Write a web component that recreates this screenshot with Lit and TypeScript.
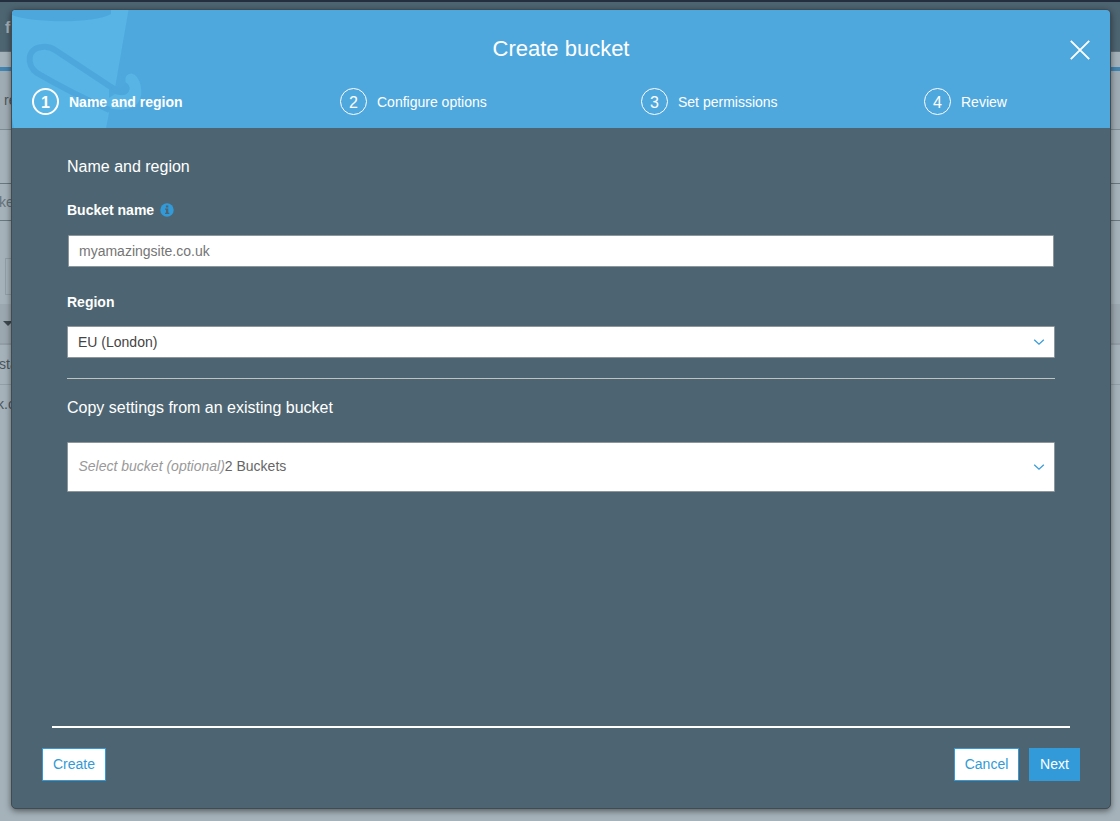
import { LitElement, html, css, svg } from "lit";
import { customElement } from "lit/decorators.js";

const chevron = svg`<svg class="chevron" width="12" height="8" viewBox="0 0 12 8"><path d="M1.200 1.700L6 6.200L10.800 1.700" fill="none" stroke="#3a9bdc" stroke-width="1.300"/></svg>`;

@customElement("page-backdrop")
class PageBackdrop extends LitElement {
  static styles = css`
    :host {
      display: flex;
      flex-direction: column;
      height: 821px;
      overflow: hidden;
      background: #a5b2ba;
      color: #4b565e;
      font: 14px/20px "Liberation Sans", Arial, sans-serif;
      white-space: nowrap;
    }
    div { box-sizing: border-box; flex: none; }
    .top { height: 2px; background: #232f3e; }
    .nav { height: 50px; background: #4d6471; border-bottom: 1px solid #62727c; padding: 16px 0 0 5px; font-weight: bold; font-size: 16px; color: #a5b0b6; }
    .gap { height: 15px; }
    .accent { height: 4px; background: #4185b0; }
    .banner { height: 59px; background: #a0acb4; border-bottom: 1px solid #7f8b93; padding: 19px 0 0 4px; }
    .space { height: 53px; }
    .search { height: 38px; border-top: 1px solid #69777f; border-bottom: 1px solid #69777f; padding-top: 8px; color: #66727a; text-indent: -1px; }
    .tools { height: 83px; padding: 37px 0 0 5px; }
    .box { width: 60px; height: 37px; border: 1px solid #929ea6; }
    .head { height: 41px; background: #9ca8b0; border-bottom: 2px solid #929da5; padding: 17px 0 0 3px; }
    .caret { width: 0; border: 5px solid transparent; border-top-color: #3c474f; border-bottom: 0; }
    .row { height: 40px; border-bottom: 1px solid #939fa7; padding-top: 9px; text-indent: -1px; }
    .last { border: 0; text-indent: -3px; }
  `;
  render() {
    return html`
      <div class="top"></div>
      <div class="nav">f</div>
      <div class="gap"></div>
      <div class="accent"></div>
      <div class="banner">re</div>
      <div class="space"></div>
      <div class="search">ke</div>
      <div class="tools"><div class="box"></div></div>
      <div class="head"><div class="caret"></div></div>
      <div class="row">sta</div>
      <div class="row last">k.c</div>
    `;
  }
}

@customElement("bucket-dialog")
class BucketDialog extends LitElement {
  static styles = css`
    :host {
      display: flex;
      flex-direction: column;
      box-sizing: border-box;
      width: 1100px;
      height: 800px;
      border: 1px solid #414b52;
      border-radius: 5px;
      overflow: hidden;
      background: #4d6572;
      color: #fff;
      box-shadow: 0 2px 6px rgba(0, 0, 0, 0.5);
      font: 14px/20px "Liberation Sans", Arial, sans-serif;
    }
    * { box-sizing: border-box; }
    header { position: relative; height: 118px; background: #4fa8dd; flex: none; }
    .pail { position: absolute; left: 0; top: 0; }
    .title { position: relative; height: 78px; padding-top: 26px; text-align: center; font-size: 22px; line-height: 25px; }
    .close { position: absolute; right: 20px; top: 30px; }
    .steps { position: relative; display: grid; grid-template-columns: 308px 301px 283px auto; padding-left: 20px; }
    .step { display: flex; align-items: center; gap: 10px; height: 27px; white-space: nowrap; }
    .num { width: 27px; height: 27px; border: 1px solid #fff; border-radius: 50%; text-align: center; font-size: 16px; line-height: 27px; }
    .label { padding-top: 1px; }
    .active { font-weight: bold; }
    .active .num { border-width: 2px; line-height: 25px; }
    main { height: 598px; padding: 28px 55px 0; flex: none; }
    .section { height: 20px; font-size: 16px; line-height: 22px; }
    .field { display: flex; align-items: center; gap: 6px; font-weight: bold; height: 20px; margin-top: 24px; }
    .box { display: flex; align-items: center; justify-content: space-between; background: #fff; border: 1px solid #8d969a; border-radius: 1px; color: #444; padding: 0 9px 0 10px; height: 32px; }
    .input { margin: 15px 1px 0; color: #757575; }
    .region { margin-top: 25px; }
    .select { margin-top: 14px; }
    .rule { height: 1px; background: #bfc4be; margin: 20px 0 18px; }
    .copy { height: 50px; margin-top: 25px; color: #666; }
    .copy-text { padding: 0 0 2px 0.500px; }
    em { color: #999; }
    .chevron { display: block; }
    .line { height: 2px; background: #fff; margin: 0 40px; flex: none; }
    footer { display: flex; gap: 10px; padding: 20px 30px; }
    .btn { font: inherit; height: 33px; padding: 0 0 2px; border: 1px solid #329ad6; background: #fff; color: #329ad6; text-align: center; }
    .create { width: 64px; margin-right: auto; }
    .cancel { width: 65px; }
    .next { width: 51px; background: #329ad9; color: #fff; }
  `;
  render() {
    const steps = ["Name and region", "Configure options", "Set permissions", "Review"];
    return html`
      <header>
        <svg class="pail" width="140" height="118" viewBox="12 10 140 118">
          <path d="M12 10H128.500L115 88H109V113L106 128H14L12 118Z" fill="#57b4e4"/>
          <path d="M12 10H111V14C94 24 32 23 12 15Z" fill="#4da7dc"/>
          <path d="M109 98L115 94Q129 98 129.500 88Q129 84 125.500 82Q124 74 131.500 73.500Q138 75 140.500 85Q143 96 138 103Q129 113 108 108Z" fill="#57b4e4"/>
          <path d="M109.500 110C87 100 61 87 37 73C26 65 27 48 42 47Q49 46 55 50L114 89" fill="none" stroke="#4da7dc" stroke-width="6"/>
          <path d="M112 84.500L115 86Q121 90.500 125.500 83Q129.500 85 129.500 89Q127 99 111 92Z" fill="#4da7dc"/>
        </svg>
        <div class="title">Create bucket</div>
        <svg class="close" width="20" height="20" viewBox="0 0 20 20"><path d="M.8.8L19.200 19.200M19.200.8L.8 19.200" stroke="#fff" stroke-width="1.900"/></svg>
        <div class="steps">
          ${steps.map((name, i) => html`<div class="step ${i === 0 ? "active" : ""}"><span class="num">${i + 1}</span><span class="label">${name}</span></div>`)}
        </div>
      </header>
      <main>
        <div class="section">Name and region</div>
        <div class="field">Bucket name
          <svg width="14" height="14" viewBox="0 0 14 14"><circle cx="7" cy="7" r="6.700" fill="#329ad9"/><path d="M5.900 2.400H8.300V4.500H5.900ZM5 5.500H8.300V9.700H9.300V11H5V9.700H6V6.800H5Z" fill="#4d6572"/></svg>
        </div>
        <div class="box input">myamazingsite.co.uk</div>
        <div class="field region">Region</div>
        <div class="box select">EU (London)${chevron}</div>
        <div class="rule"></div>
        <div class="section">Copy settings from an existing bucket</div>
        <div class="box copy"><span class="copy-text"><em>Select bucket (optional)</em>2 Buckets</span>${chevron}</div>
      </main>
      <div class="line"></div>
      <footer>
        <button class="btn create">Create</button>
        <button class="btn cancel">Cancel</button>
        <button class="btn next">Next</button>
      </footer>
    `;
  }
}

@customElement("app-root")
class AppRoot extends LitElement {
  static styles = css`
    :host { display: block; position: relative; width: 1120px; height: 821px; overflow: hidden; }
    .modal { position: absolute; left: 11px; top: 9px; }
  `;
  render() {
    return html`<page-backdrop></page-backdrop><bucket-dialog class="modal"></bucket-dialog>`;
  }
}
